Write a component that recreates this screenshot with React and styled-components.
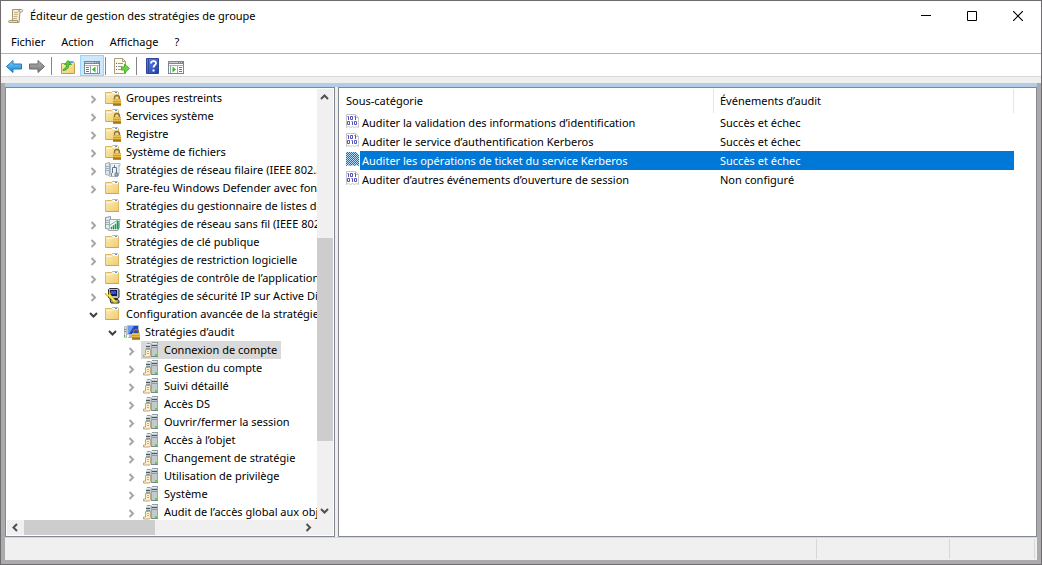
import { useState } from "react";
import styled, { createGlobalStyle } from "styled-components";

const GlobalStyle = createGlobalStyle`
  * {
    box-sizing: border-box;
  }
  body {
    margin: 0;
    background: #ffffff;
    color: #000000;
    font-family: "Noto Sans", "Open Sans", sans-serif;
    font-size: 11px;
    line-height: 18px;
  }
  button {
    padding: 0;
    border: none;
    background: none;
    color: inherit;
    font: inherit;
  }
`;

const Window = styled.div`
  display: flex;
  flex-direction: column;
  height: 100vh;
  min-height: 320px;
  border: 1px solid #6e6c6e;
`;

const TitleBar = styled.header`
  display: flex;
  align-items: center;
  flex: none;
  height: 30px;
  padding-left: 7px;
`;

const Title = styled.h1`
  flex: 1;
  margin: 0 0 0 6px;
  font-size: 11px;
  font-weight: 400;
`;

const CaptionButton = styled.button`
  display: flex;
  align-items: center;
  justify-content: center;
  width: 46px;
  height: 30px;
`;

const MenuBar = styled.nav`
  display: flex;
  flex: none;
  height: 22px;
  padding: 2px;
`;

const MenuItem = styled.button`
  padding: 0 8px;
`;

const Toolbar = styled.div`
  display: flex;
  align-items: flex-end;
  gap: 1px;
  flex: none;
  height: 24px;
  padding-left: 2px;
  border-top: 1px solid #b1b3bb;
  border-bottom: 1px solid #d9d9d9;
`;

const ToolButton = styled.button`
  display: flex;
  align-items: center;
  justify-content: center;
  width: ${(props) => (props.$pressed ? 24 : 22)}px;
  height: 21px;
  padding-top: 1px;
  border: 1px solid ${(props) => (props.$pressed ? "#99d1ff" : "transparent")};
  background: ${(props) => (props.$pressed ? "#cce8ff" : "transparent")};
`;

const ToolSeparator = styled.span`
  width: 1px;
  height: 18px;
  margin: 0 4px 1px ${(props) => (props.$tight ? 0 : 2)}px;
  background: #858585;
`;

const Rebar = styled.div`
  flex: none;
  height: 6px;
  background: #efefef;
`;

const Frame = styled.div`
  display: flex;
  flex-direction: column;
  flex: 1;
  min-height: 0;
  padding: 0 4px 4px;
  background: #ababab;
`;

const Panes = styled.main`
  display: flex;
  gap: 3px;
  flex: 1;
  min-height: 0;
  border-top: 4px solid #b4cde6;
  background: #efefef;
`;

const TreePane = styled.section`
  display: grid;
  grid-template-columns: 1fr 16px;
  grid-template-rows: 1fr 15px;
  flex: none;
  width: 330px;
  padding: 1px;
  border: 1px solid #828790;
  background: #ffffff;
`;

const Tree = styled.ul`
  min-height: 0;
  margin: 0;
  padding: 0;
  overflow: hidden;
  list-style: none;
`;

const TreeRow = styled.li`
  display: flex;
  align-items: center;
  height: 18px;
  padding-left: ${(props) => 77 + props.$level * 19}px;
  white-space: nowrap;
`;

const Expander = styled.button`
  display: flex;
  align-items: center;
  justify-content: center;
  flex: none;
  width: 19px;
  height: 18px;
  padding-top: 2px;
`;

const ExpanderSpace = styled.span`
  flex: none;
  width: 19px;
`;

const TreeLabel = styled.button`
  display: flex;
  align-items: center;
  gap: 5px;
  flex: none;
  height: 18px;
  padding: 0 4px 0 2px;
  background: ${(props) => (props.$selected ? "#d9d9d9" : "transparent")};
  white-space: nowrap;
`;

const Scrollbar = styled.div`
  display: flex;
  flex-direction: ${(props) => (props.$vertical ? "column" : "row")};
  min-width: 0;
  min-height: 0;
  background: #f0f0f0;
`;

const ScrollButton = styled.button`
  display: flex;
  align-items: center;
  justify-content: center;
  flex: none;
  width: ${(props) => (props.$vertical ? 15 : 17)}px;
  height: ${(props) => (props.$vertical ? 17 : 15)}px;
`;

const ScrollTrack = styled.div`
  display: flex;
  flex-direction: ${(props) => (props.$vertical ? "column" : "row")};
  flex: 1;
`;

const ScrollBefore = styled.span`
  flex: ${(props) => props.$size} 0 0;
`;

const ScrollThumb = styled.span`
  flex: ${(props) => props.$size} 0 0;
  background: #cdcdcd;
`;

const ScrollCorner = styled.div`
  background: #f0f0f0;
`;

const ListPane = styled.section`
  flex: 1;
  min-width: 0;
  padding-top: 1px;
  border: 1px solid #828790;
  background: #ffffff;
  overflow: hidden;
`;

const AuditTable = styled.table`
  width: 675px;
  border-collapse: separate;
  border-spacing: 0;
  table-layout: fixed;
`;

const HeaderCell = styled.th`
  width: ${(props) => props.$width}px;
  height: 24px;
  padding: 0 6px;
  background: linear-gradient(#e5e5e5, #e5e5e5) right top / 1px 24px no-repeat;
  font-weight: 400;
  text-align: left;

  &:first-child {
    padding-left: 7px;
  }
`;

const NameCell = styled.td`
  height: 19px;
  padding: 0 0 0 7px;
`;

const NameContent = styled.div`
  display: flex;
  align-items: flex-start;
  height: 19px;
`;

const NameText = styled.span`
  flex: 1;
  height: 19px;
  padding: 1px 0 0 2px;
  background: ${(props) => (props.$selected ? "#0078d7" : "transparent")};
  color: ${(props) => (props.$selected ? "#ffffff" : "#000000")};
  white-space: nowrap;
`;

const ValueCell = styled.td`
  height: 19px;
  padding: 1px 6px 0;
  background: ${(props) => (props.$selected ? "#0078d7" : "transparent")};
  color: ${(props) => (props.$selected ? "#ffffff" : "#000000")};
`;

const StatusBar = styled.footer`
  display: flex;
  flex: none;
  height: 23px;
  padding: 1px 2px 1px 0;
  border-top: 1px solid #d7d7d7;
  background: #f0f0f0;
`;

const StatusCell = styled.div`
  flex: ${(props) => (props.$width ? `0 0 ${props.$width}px` : "1")};
  border-right: 1px solid #d7d7d7;
`;

const Svg = styled.svg`
  display: block;
  flex: none;
`;

const HiddenSvg = styled.svg`
  position: absolute;
`;

const Icon = ({ children, size = 16, height = size }) => (
  <Svg width={size} height={height} viewBox={`0 0 ${size} ${height}`} aria-hidden="true">
    {children}
  </Svg>
);

const Gradients = () => (
  <HiddenSvg width="0" height="0" aria-hidden="true">
    <defs>
      <linearGradient id="folder" x1="0" y1="0" x2="1" y2="1">
        <stop offset="0" stopColor="#fdeeb5" />
        <stop offset="1" stopColor="#efcb70" />
      </linearGradient>
      <linearGradient id="blue" x1="0" y1="0" x2="0" y2="1">
        <stop offset="0" stopColor="#7ed0fb" />
        <stop offset="1" stopColor="#0a86dc" />
      </linearGradient>
      <linearGradient id="grey" x1="0" y1="0" x2="0" y2="1">
        <stop offset="0" stopColor="#b5b5b5" />
        <stop offset="1" stopColor="#757575" />
      </linearGradient>
      <linearGradient id="help" x1="0" y1="0" x2="1" y2="1">
        <stop offset="0" stopColor="#6687dd" />
        <stop offset="1" stopColor="#1c3bab" />
      </linearGradient>
      <linearGradient id="lock" x1="0" y1="0" x2="0" y2="1">
        <stop offset="0" stopColor="#e9b93c" />
        <stop offset="1" stopColor="#b07a10" />
      </linearGradient>
      <pattern id="dither" width="2" height="2" patternUnits="userSpaceOnUse">
        <path d="M0 0h1v1H0zM1 1h1v1H1z" fill="#0078d7" />
      </pattern>
    </defs>
  </HiddenSvg>
);

const FolderShape = () => (
  <>
    <path d="M.5 2.500h6l1-1h5l1 1v11H.5z" fill="url(#folder)" stroke="#dcb662" />
    <path d="M8 2h5v1H7z" fill="#ffffff" />
    <path d="M10 2h2v1h-2z" fill="#4b9be0" />
    <path d="M1 4.500h6l1-1h5" fill="none" stroke="#fff6cf" />
    <path d="M1 13.500h13" stroke="#c89a43" opacity="0.600" />
  </>
);

const LockShape = () => (
  <>
    <path d="M9.500 10V8a2.500 2.500 0 0 1 5 0v2" fill="none" stroke="#8c7340" strokeWidth="1.300" />
    <path d="M8 9h8v6.500H8z" fill="url(#lock)" />
    <path d="M8 10.500h8M8 12.500h8" stroke="#f7d264" strokeWidth="0.600" />
    <path d="M8 15h8" stroke="#96690f" />
  </>
);

const FolderIcon = () => (
  <Icon>
    <FolderShape />
  </Icon>
);

const LockedFolderIcon = () => (
  <Icon>
    <FolderShape />
    <LockShape />
  </Icon>
);

const WiredIcon = () => (
  <Icon>
    <path d="M.5 1.500l4-1v13l-4-1z" fill="#dce4ea" stroke="#a3aeb7" />
    <path d="M1 4.500h3M1 6.500h3M1 8.500h3" stroke="#9db3c6" />
    <path d="M5.500 1.500h9.500v2h-1v8l-1.500 3h-8l1-3z" fill="#eef2f5" stroke="#b2babf" />
    <path d="M7.500 11V5.500h4V11M9.500 5.500V3" fill="none" stroke="#627485" />
    <path d="M6.500 11v3M10 11h3v3h-3z" fill="#a9b8c5" stroke="#627485" strokeWidth="0.800" />
    <path d="M14 3v2" stroke="#8fc9df" />
  </Icon>
);

const WirelessIcon = () => (
  <Icon>
    <path d="M.5 1.500l5-1v13l-5-1z" fill="#e4e9ec" stroke="#8b98a3" />
    <path d="M1 4.500h4M1 6.500h4M1 8.500h4" stroke="#9fb1bf" />
    <path d="M4.500 3.500H15l-.5 3v5l-1.500 3H3.500l1-3z" fill="#f4f7f4" stroke="#a6ada6" />
    <path d="M6 11h1v2H6zM8 9.500h1V13H8zM10 8h1v5h-1zM12 5h1.500v8H12z" fill="#179b54" stroke="#2f9f64" strokeWidth="0.600" />
    <path d="M5 9l8-5" stroke="#72c29a" />
  </Icon>
);

const IpSecurityIcon = () => (
  <Icon>
    <path d="M4.500.5h8l1.500 1v8l-1.500 1h-8l-1-1v-8z" fill="#b9bcc0" stroke="#303030" />
    <path d="M5 2h7v6H5z" fill="#161a60" />
    <path d="M6 3h5v3H6z" fill="#2458e8" />
    <path d="M5 11.500h8l1 1.500v2H6z" fill="#9b9ea3" stroke="#303030" />
    <path d="M.5 5c-.5 2 1 3.500 3 3.200l5.500 6.300h3L5.500 6.500c.5-2-.7-2.500-1.500-2.300l.3 2L2.500 7z" fill="#ffe92e" stroke="#b5a312" strokeWidth="0.500" />
  </Icon>
);

const AuditPolicyIcon = () => (
  <Icon>
    <path d="M.5 2.500h2v11h-2z" fill="#e5e8ea" stroke="#b3bac0" />
    <path d="M0 5.500h2M0 7.500h2" stroke="#7d8c9b" />
    <path d="M0 11h1v2H0z" fill="#46b84a" />
    <rect x="3.500" y="1.500" width="11" height="9" fill="#1c46c4" stroke="#b8c4d4" />
    <path d="M4 2h6L5 10H4z" fill="#6c9af0" />
    <path d="M5 11h3v3H4v-1h1z" fill="#aeb6bf" />
    <LockShape />
  </Icon>
);

const AuditCategoryIcon = () => (
  <Icon>
    <path d="M4 1h4v8H3V3zM9 0h6v15H8V2z" fill="#c1cacf" />
    <path d="M3 2.500h4M9 1.500h5" stroke="#e6ebed" />
    <path d="M4 1.500h3M9 .5h6" stroke="#8f9ba1" />
    <path d="M3 4.500h4M9 3.500h5" stroke="#4a575f" />
    <path d="M3 6.500h4M9 5.500h5" stroke="#8d999f" />
    <path d="M8.500 2v13M14.500 1v14" stroke="#9aa6ab" />
    <path d="M8 14.500h7" stroke="#7c888e" />
    <path d="M12 12h2v2h-2z" fill="#4fe01a" />
    <path d="M2.500 7.500h5v6l-1 1.500H.5v-2h2z" fill="#fbf0cf" stroke="#bda679" />
    <path d="M4 9.500h2M4 11.500h2" stroke="#c7ac7e" />
  </Icon>
);

const ScrollIcon = () => (
  <Icon>
    <path d="M4.500 1.500h9c1.500 0 1.500 2.500 0 2.500h-1.500l-1 10.500h-8c1.500-1 1.500-3 1.500-5z" fill="#f7edcf" stroke="#a59672" />
    <path d="M11.500 4c-1-.5-1-2.500.5-2.500" fill="#cdbd92" stroke="#8f815f" strokeWidth="0.800" />
    <path d="M1.500 12.500h8v2h-8c-1.300 0-1.300-2 0-2z" fill="#efdfb5" stroke="#a59672" />
    <path d="M6 4.500h4M6 6.500h4M5.500 8.500h4M5 10.500h4" stroke="#c2b38f" />
  </Icon>
);

const ArrowIcon = ({ back }) => (
  <Icon>
    {back ? (
      <path d="M.5 8.500L7 2.500V6h8.500v5H7v3.500z" fill="url(#blue)" stroke="#2878b5" />
    ) : (
      <path d="M15.500 8.500L9 2.500V6H.5v5H9v3.500z" fill="url(#grey)" stroke="#6b6b6b" />
    )}
  </Icon>
);

const FolderUpIcon = () => (
  <Icon>
    <path d="M1.500 5.500h6l1-2h5l1 2v10h-13z" fill="url(#folder)" stroke="#c99d45" />
    <path d="M9 4h4v1H9z" fill="#5ca4df" />
    <path d="M3 11.500c2.500-1 3.500-3 3.500-5h-2L8 2.500l3.500 4H9c0 4-3 6-6 6z" fill="#55cc30" stroke="#2e9618" strokeWidth="0.700" />
  </Icon>
);

const PaneIcon = ({ side }) => (
  <Icon>
    <rect x="0.500" y="3.500" width="15" height="12" fill="#ffffff" stroke="#7c8794" />
    <path d="M1 4h14v2H1z" fill="#7c8794" />
    <path d="M1 4.500h9M11 4.500h1M13 4.500h1" stroke="#c5ccd4" />
    <path d="M1 7.500h14" stroke="#a9b2bd" />
    {side === "left" ? (
      <>
        <path d="M6.500 8v7M13.500 8v7" stroke="#98a2ae" />
        <path d="M2 9.500h3M2 11.500h3M2 13.500h3" stroke="#66788c" />
        <path d="M11.500 8.500v6L8 11.500z" fill="#3cb528" />
      </>
    ) : (
      <>
        <path d="M2.500 8v7M9.500 8v7" stroke="#98a2ae" />
        <path d="M11 9.500h3M11 11.500h3M11 13.500h3" stroke="#66788c" />
        <path d="M4.500 8.500v6L8 11.500z" fill="#3cb528" />
      </>
    )}
  </Icon>
);

const ExportIcon = () => (
  <Icon>
    <path d="M.5.5h8l3 3v12H.5z" fill="#fffbe6" stroke="#a89f81" />
    <path d="M8.500.5v3h3" fill="none" stroke="#a89f81" />
    <path d="M2 5.500h1M2 8.500h1M2 11.500h1" stroke="#4f5e9d" />
    <path d="M4 5.500h5M4 8.500h4M4 11.500h4" stroke="#9096ab" />
    <path d="M7.500 9h3V6l5 4.500-5 4.500v-3h-3z" fill="#69d53f" stroke="#38a51f" strokeWidth="0.800" />
  </Icon>
);

const HelpIcon = () => (
  <Icon>
    <path d="M1.500.5h12v15h-12z" fill="url(#help)" stroke="#2d469c" />
    <path d="M3.500 1v14" stroke="#284ba9" />
    <path d="M6 5.500c0-3.500 5.500-3 5 0-.2 1.500-2.500 1.800-2.500 4" fill="none" stroke="#ffffff" strokeWidth="1.800" />
    <path d="M7.500 11.500h2v2h-2z" fill="#ffffff" />
  </Icon>
);

// Page with two lines of bits; dithered while its row is selected
const BitsIcon = ({ selected }) => (
  <Icon size={14} height={16}>
    <path d="M.5 1.500h9l3 3v10l-2-1-2 1-2-1-2 1-2-1-2 1z" fill="#ffffff" stroke="#c6c6c6" />
    <path d="M9.500 1.500v3h3" fill="none" stroke="#c6c6c6" />
    <g fill="none" stroke="#5454b8">
      <path d="M1.500 3.500h1V7M4.500 3.500h2v3h-2zM8.500 3.500h1V7" />
      <path d="M1.500 8.500h2v3h-2zM5.500 8.500h1V12M8.500 8.500h2v3h-2z" />
    </g>
    {selected && <path d="M0 1h10l3 3v11l-3-1-2 1-2-1-2 1-2-1-2 1z" fill="#b9dcf6" />}
    {selected && <path d="M0 1h10l3 3v11l-3-1-2 1-2-1-2 1-2-1-2 1z" fill="url(#dither)" />}
  </Icon>
);

const chevrons = {
  up: "M1 6l3.500-3.500L8 6",
  down: "M1 2l3.500 3.500L8 2",
  left: "M6 1L2.500 4.500L6 8",
  right: "M2.500 1L6 4.500L2.500 8",
};

const Chevron = ({ direction, color = "#505050" }) => (
  <Icon size={9}>
    <path d={chevrons[direction]} fill="none" stroke={color} strokeWidth="2" />
  </Icon>
);

const treeItems = [
  { text: "Groupes restreints", icon: LockedFolderIcon, level: 0 },
  { text: "Services système", icon: LockedFolderIcon, level: 0 },
  { text: "Registre", icon: LockedFolderIcon, level: 0 },
  { text: "Système de fichiers", icon: LockedFolderIcon, level: 0 },
  { text: "Stratégies de réseau filaire (IEEE 802.3)", icon: WiredIcon, level: 0 },
  { text: "Pare-feu Windows Defender avec fonctions avancées", icon: FolderIcon, level: 0 },
  { text: "Stratégies du gestionnaire de listes de réseaux", icon: FolderIcon, level: 0, leaf: true },
  { text: "Stratégies de réseau sans fil (IEEE 802.11)", icon: WirelessIcon, level: 0 },
  { text: "Stratégies de clé publique", icon: FolderIcon, level: 0 },
  { text: "Stratégies de restriction logicielle", icon: FolderIcon, level: 0 },
  { text: "Stratégies de contrôle de l’application", icon: FolderIcon, level: 0 },
  { text: "Stratégies de sécurité IP sur Active Directory", icon: IpSecurityIcon, level: 0 },
  { text: "Configuration avancée de la stratégie d’audit", icon: FolderIcon, level: 0, open: true },
  { text: "Stratégies d’audit", icon: AuditPolicyIcon, level: 1, open: true },
  { text: "Connexion de compte", icon: AuditCategoryIcon, level: 2 },
  { text: "Gestion du compte", icon: AuditCategoryIcon, level: 2 },
  { text: "Suivi détaillé", icon: AuditCategoryIcon, level: 2 },
  { text: "Accès DS", icon: AuditCategoryIcon, level: 2 },
  { text: "Ouvrir/fermer la session", icon: AuditCategoryIcon, level: 2 },
  { text: "Accès à l’objet", icon: AuditCategoryIcon, level: 2 },
  { text: "Changement de stratégie", icon: AuditCategoryIcon, level: 2 },
  { text: "Utilisation de privilège", icon: AuditCategoryIcon, level: 2 },
  { text: "Système", icon: AuditCategoryIcon, level: 2 },
  { text: "Audit de l’accès global aux objets", icon: AuditCategoryIcon, level: 2 },
];

const auditRows = [
  ["Auditer la validation des informations d’identification", "Succès et échec"],
  ["Auditer le service d’authentification Kerberos", "Succès et échec"],
  ["Auditer les opérations de ticket du service Kerberos", "Succès et échec"],
  ["Auditer d’autres événements d’ouverture de session", "Non configuré"],
];

const App = () => {
  const [category, setCategory] = useState("Connexion de compte");
  const [selectedRow, setSelectedRow] = useState(2);

  return (
    <Window>
      <GlobalStyle />
      <Gradients />
      <TitleBar>
        <ScrollIcon />
        <Title>Éditeur de gestion des stratégies de groupe</Title>
        <CaptionButton aria-label="Réduire">
          <Icon size={10}>
            <path d="M0 4.500h10" stroke="#000000" />
          </Icon>
        </CaptionButton>
        <CaptionButton aria-label="Agrandir">
          <Icon size={10}>
            <path d="M.5.5h9v9h-9z" fill="none" stroke="#000000" />
          </Icon>
        </CaptionButton>
        <CaptionButton aria-label="Fermer">
          <Icon size={10}>
            <path d="M0 0l10 10M10 0L0 10" stroke="#000000" strokeWidth="1.200" />
          </Icon>
        </CaptionButton>
      </TitleBar>
      <MenuBar>
        <MenuItem>Fichier</MenuItem>
        <MenuItem>Action</MenuItem>
        <MenuItem>Affichage</MenuItem>
        <MenuItem>?</MenuItem>
      </MenuBar>
      <Toolbar>
        <ToolButton aria-label="Précédent">
          <ArrowIcon back />
        </ToolButton>
        <ToolButton aria-label="Suivant">
          <ArrowIcon />
        </ToolButton>
        <ToolSeparator />
        <ToolButton aria-label="Monter d’un niveau">
          <FolderUpIcon />
        </ToolButton>
        <ToolButton $pressed aria-label="Arborescence de la console">
          <PaneIcon side="left" />
        </ToolButton>
        <ToolSeparator $tight />
        <ToolButton aria-label="Exporter la liste">
          <ExportIcon />
        </ToolButton>
        <ToolSeparator />
        <ToolButton aria-label="Aide">
          <HelpIcon />
        </ToolButton>
        <ToolButton aria-label="Volet Actions">
          <PaneIcon side="right" />
        </ToolButton>
      </Toolbar>
      <Rebar />
      <Frame>
        <Panes>
          <TreePane>
            <Tree role="tree">
              {treeItems.map(({ text, icon: ItemIcon, level, open, leaf }) => (
                <TreeRow key={text} $level={level} role="treeitem">
                  {leaf ? (
                    <ExpanderSpace />
                  ) : (
                    <Expander aria-label={open ? "Réduire" : "Développer"}>
                      <Chevron direction={open ? "down" : "right"} color={open ? "#404040" : "#a6a6a6"} />
                    </Expander>
                  )}
                  <TreeLabel $selected={category === text} onClick={() => setCategory(text)}>
                    <ItemIcon />
                    {text}
                  </TreeLabel>
                </TreeRow>
              ))}
            </Tree>
            <Scrollbar $vertical>
              <ScrollButton $vertical aria-label="Défiler vers le haut">
                <Chevron direction="up" />
              </ScrollButton>
              <ScrollTrack $vertical>
                <ScrollBefore $size={132} />
                <ScrollThumb $size={202} />
                <ScrollBefore $size={62} />
              </ScrollTrack>
              <ScrollButton $vertical aria-label="Défiler vers le bas">
                <Chevron direction="down" />
              </ScrollButton>
            </Scrollbar>
            <Scrollbar>
              <ScrollButton aria-label="Défiler vers la gauche">
                <Chevron direction="left" />
              </ScrollButton>
              <ScrollTrack>
                <ScrollThumb $size={131} />
                <ScrollBefore $size={145} />
              </ScrollTrack>
              <ScrollButton aria-label="Défiler vers la droite">
                <Chevron direction="right" />
              </ScrollButton>
            </Scrollbar>
            <ScrollCorner />
          </TreePane>
          <ListPane>
            <AuditTable>
              <thead>
                <tr>
                  <HeaderCell $width={375}>Sous-catégorie</HeaderCell>
                  <HeaderCell $width={300}>Événements d’audit</HeaderCell>
                </tr>
              </thead>
              <tbody>
                {auditRows.map(([name, value], index) => (
                  <tr key={name} onClick={() => setSelectedRow(index)}>
                    <NameCell>
                      <NameContent>
                        <BitsIcon selected={index === selectedRow} />
                        <NameText $selected={index === selectedRow}>{name}</NameText>
                      </NameContent>
                    </NameCell>
                    <ValueCell $selected={index === selectedRow}>{value}</ValueCell>
                  </tr>
                ))}
              </tbody>
            </AuditTable>
          </ListPane>
        </Panes>
        <StatusBar>
          <StatusCell />
          <StatusCell $width={133} />
          <StatusCell $width={85} />
        </StatusBar>
      </Frame>
    </Window>
  );
};

export default App;
